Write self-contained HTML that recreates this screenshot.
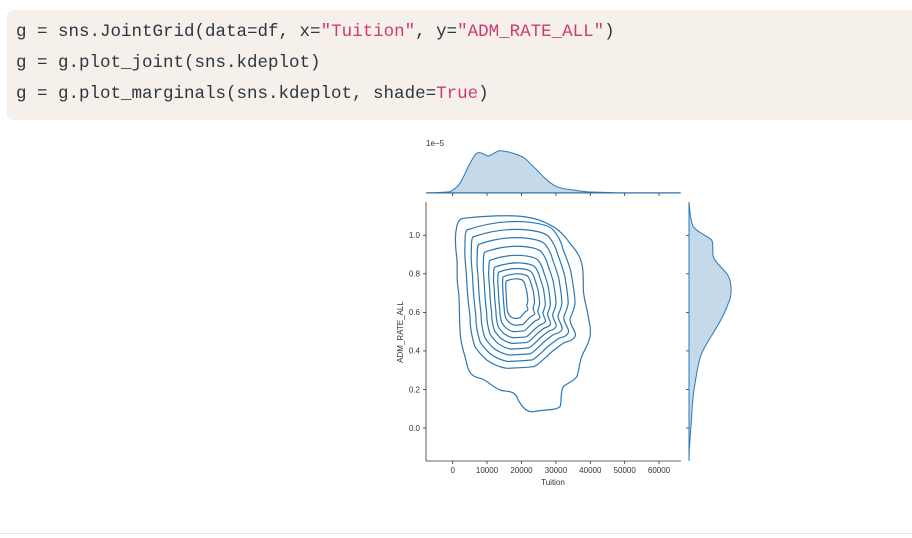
<!DOCTYPE html>
<html><head><meta charset="utf-8"><style>
body{margin:0;width:912px;height:538px;background:#fff;position:relative;overflow:hidden}
.code{position:absolute;left:7px;top:10px;width:920px;height:110px;background:#f5f1ea;border-radius:6px}
.code div{position:absolute;left:9px;font-family:"Liberation Mono",monospace;font-size:17.5px;color:#2d3640;white-space:pre}
.s{color:#d03a72}
.line{position:absolute;left:0;top:533px;width:912px;height:1px;background:#e5e5e5}
svg{position:absolute;left:0;top:0}
</style></head><body>
<div class="code">
<div style="top:12px">g = sns.JointGrid(data=df, x=<span class="s">"Tuition"</span>, y=<span class="s">"ADM_RATE_ALL"</span>)</div>
<div style="top:43px">g = g.plot_joint(sns.kdeplot)</div>
<div style="top:74px">g = g.plot_marginals(sns.kdeplot, shade=<span class="s">True</span>)</div>
</div>
<div class="line"></div>
<svg width="912" height="538" font-family="Liberation Sans, sans-serif" font-size="8" fill="#333">
<defs>
<path id="c" d="M466.7,230 C490,222 510,221 523.3,221.7 C540,223 550,226 553.3,230 C560,238 562,245 563.3,250 C568,262 571,270 571.7,276.7 C574,290 575,298 575,303.3 C574,312 570,316 570,320 C571,328 577,332 575,336.7 C572,342 566,341 563.3,343.3 C555,349 550,353 546.7,356.7 C540,362 537,366 533.3,366.7 C520,368 512,368 506.7,368.3 C498,367 491,363 486.7,360 C480,354 477,350 475,346.7 C471,335 470,325 470,316.7 C468,300 467,290 466.7,280 C466,265 464,255 465,246.7 C465,238 465,233 466.7,230Z" fill="none" stroke="#2a77b4" stroke-width="1.2" vector-effect="non-scaling-stroke"/>
</defs>
<g fill="none" stroke="#333" stroke-width="0.8">
<line x1="426" y1="202" x2="426" y2="461"/><line x1="426" y1="461" x2="681" y2="461"/>
<line x1="426" y1="193" x2="681" y2="193"/><line x1="689" y1="202" x2="689" y2="461"/>
</g>
<g stroke="#333" stroke-width="0.8">
<line x1="452.7" y1="461" x2="452.7" y2="464"/><line x1="487" y1="461" x2="487" y2="464"/><line x1="521.5" y1="461" x2="521.5" y2="464"/><line x1="555.9" y1="461" x2="555.9" y2="464"/><line x1="590.3" y1="461" x2="590.3" y2="464"/><line x1="624.7" y1="461" x2="624.7" y2="464"/><line x1="659" y1="461" x2="659" y2="464"/>
<line x1="452.7" y1="193" x2="452.7" y2="196"/><line x1="487" y1="193" x2="487" y2="196"/><line x1="521.5" y1="193" x2="521.5" y2="196"/><line x1="555.9" y1="193" x2="555.9" y2="196"/><line x1="590.3" y1="193" x2="590.3" y2="196"/><line x1="624.7" y1="193" x2="624.7" y2="196"/><line x1="659" y1="193" x2="659" y2="196"/>
<line x1="423" y1="235.3" x2="426" y2="235.3"/><line x1="423" y1="273.8" x2="426" y2="273.8"/><line x1="423" y1="312.4" x2="426" y2="312.4"/><line x1="423" y1="350.9" x2="426" y2="350.9"/><line x1="423" y1="389.5" x2="426" y2="389.5"/><line x1="423" y1="428" x2="426" y2="428"/>
<line x1="686" y1="235.3" x2="689" y2="235.3"/><line x1="686" y1="273.8" x2="689" y2="273.8"/><line x1="686" y1="312.4" x2="689" y2="312.4"/><line x1="686" y1="350.9" x2="689" y2="350.9"/><line x1="686" y1="389.5" x2="689" y2="389.5"/><line x1="686" y1="428" x2="689" y2="428"/>
</g>
<g text-anchor="middle">
<text x="452.7" y="473">0</text><text x="487" y="473">10000</text><text x="521.5" y="473">20000</text><text x="555.9" y="473">30000</text><text x="590.3" y="473">40000</text><text x="624.7" y="473">50000</text><text x="659" y="473">60000</text>
<text x="553" y="485">Tuition</text>
</g>
<g text-anchor="end">
<text x="420" y="238">1.0</text><text x="420" y="276.6">0.8</text><text x="420" y="315.2">0.6</text><text x="420" y="353.7">0.4</text><text x="420" y="392.3">0.2</text><text x="420" y="430.8">0.0</text>
</g>
<text transform="translate(403,332) rotate(-90)" text-anchor="middle">ADM_RATE_ALL</text>
<text x="426" y="146">1e−5</text>
<path d="M426.7,192.7 C440,192.5 447,192 450,191.7 C455,189 458,186 460,183.3 C465,175 467,168 470,163.3 C474,156 476,153 478.3,152.7 C483,152 485,156 488.3,156 C493,155 496,150.5 500,150.7 C507,151 513,153 518.3,155 C524,157 527,160 530,163.3 C536,169 540,173 543.3,176.7 C549,182 553,185 556.7,186.7 C563,189 568,189.5 573.3,190 C580,191 585,191.8 590,192 C605,192.5 615,192.7 623,192.7 L680,192.7Z" fill="#c4d9ea" stroke="#2a77b4" stroke-width="1"/>
<path d="M689.3,205 C690,215 691,222 693.3,226.7 C698,233 708,236 711.7,240 C714,245 712,252 713.3,256.7 C716,265 727,270 730,280 C732,290 731,298 728.3,303.3 C725,313 720,322 715,330 C709,340 705,346 701.7,353.3 C698,362 697,372 695,383.3 C693,395 692,406 691.7,416.7 C690.5,430 690,440 689.3,450 L689,461 L689,205Z" fill="#c4d9ea" stroke="#2a77b4" stroke-width="1"/>
<path d="M463.3,218.3 C485,216 505,215.5 516.7,216 C535,217 545,222 553.3,226.7 C562,232 566,238 570,243.3 C576,250 580,256 581.7,263.3 C584,272 583,282 583.3,290 C584,300 587,308 588.3,316.7 C590,325 591,330 590,336.7 C588,346 584,350 581.7,356.7 C579,364 579,372 576.7,376.7 C573,382 567,383 563.3,386.7 C560,392 562,402 560,406.7 C555,411 545,409 533.3,411.7 C525,413 519,402 516.7,396.7 C513,390 506,392 500,390 C492,387 486,379 480,378.3 C472,377 468,371 466.7,363.3 C464,352 460,342 460,330 C459,315 460,302 458.3,290 C456,278 458,268 456.7,256.7 C455,245 455,235 456.7,226.7 C458,221 460,219 463.3,218.3Z" fill="none" stroke="#2a77b4" stroke-width="1.2"/>
<use href="#c"/>
<use href="#c" transform="translate(518,300) scale(0.88,0.9) translate(-518,-300)"/>
<use href="#c" transform="translate(518,302) scale(0.77,0.8) translate(-518,-302)"/>
<use href="#c" transform="translate(519,304) scale(0.66,0.7) translate(-519,-304)"/>
<use href="#c" transform="translate(519,306) scale(0.56,0.6) translate(-519,-306)"/>
<use href="#c" transform="translate(519,306) scale(0.47,0.51) translate(-519,-306)"/>
<use href="#c" transform="translate(518,304) scale(0.38,0.43) translate(-518,-304)"/>
<use href="#c" transform="translate(518,302) scale(0.29,0.35) translate(-518,-302)"/>
<use href="#c" transform="translate(516,300) scale(0.2,0.27) translate(-516,-300)"/>
</svg>
</body></html>
